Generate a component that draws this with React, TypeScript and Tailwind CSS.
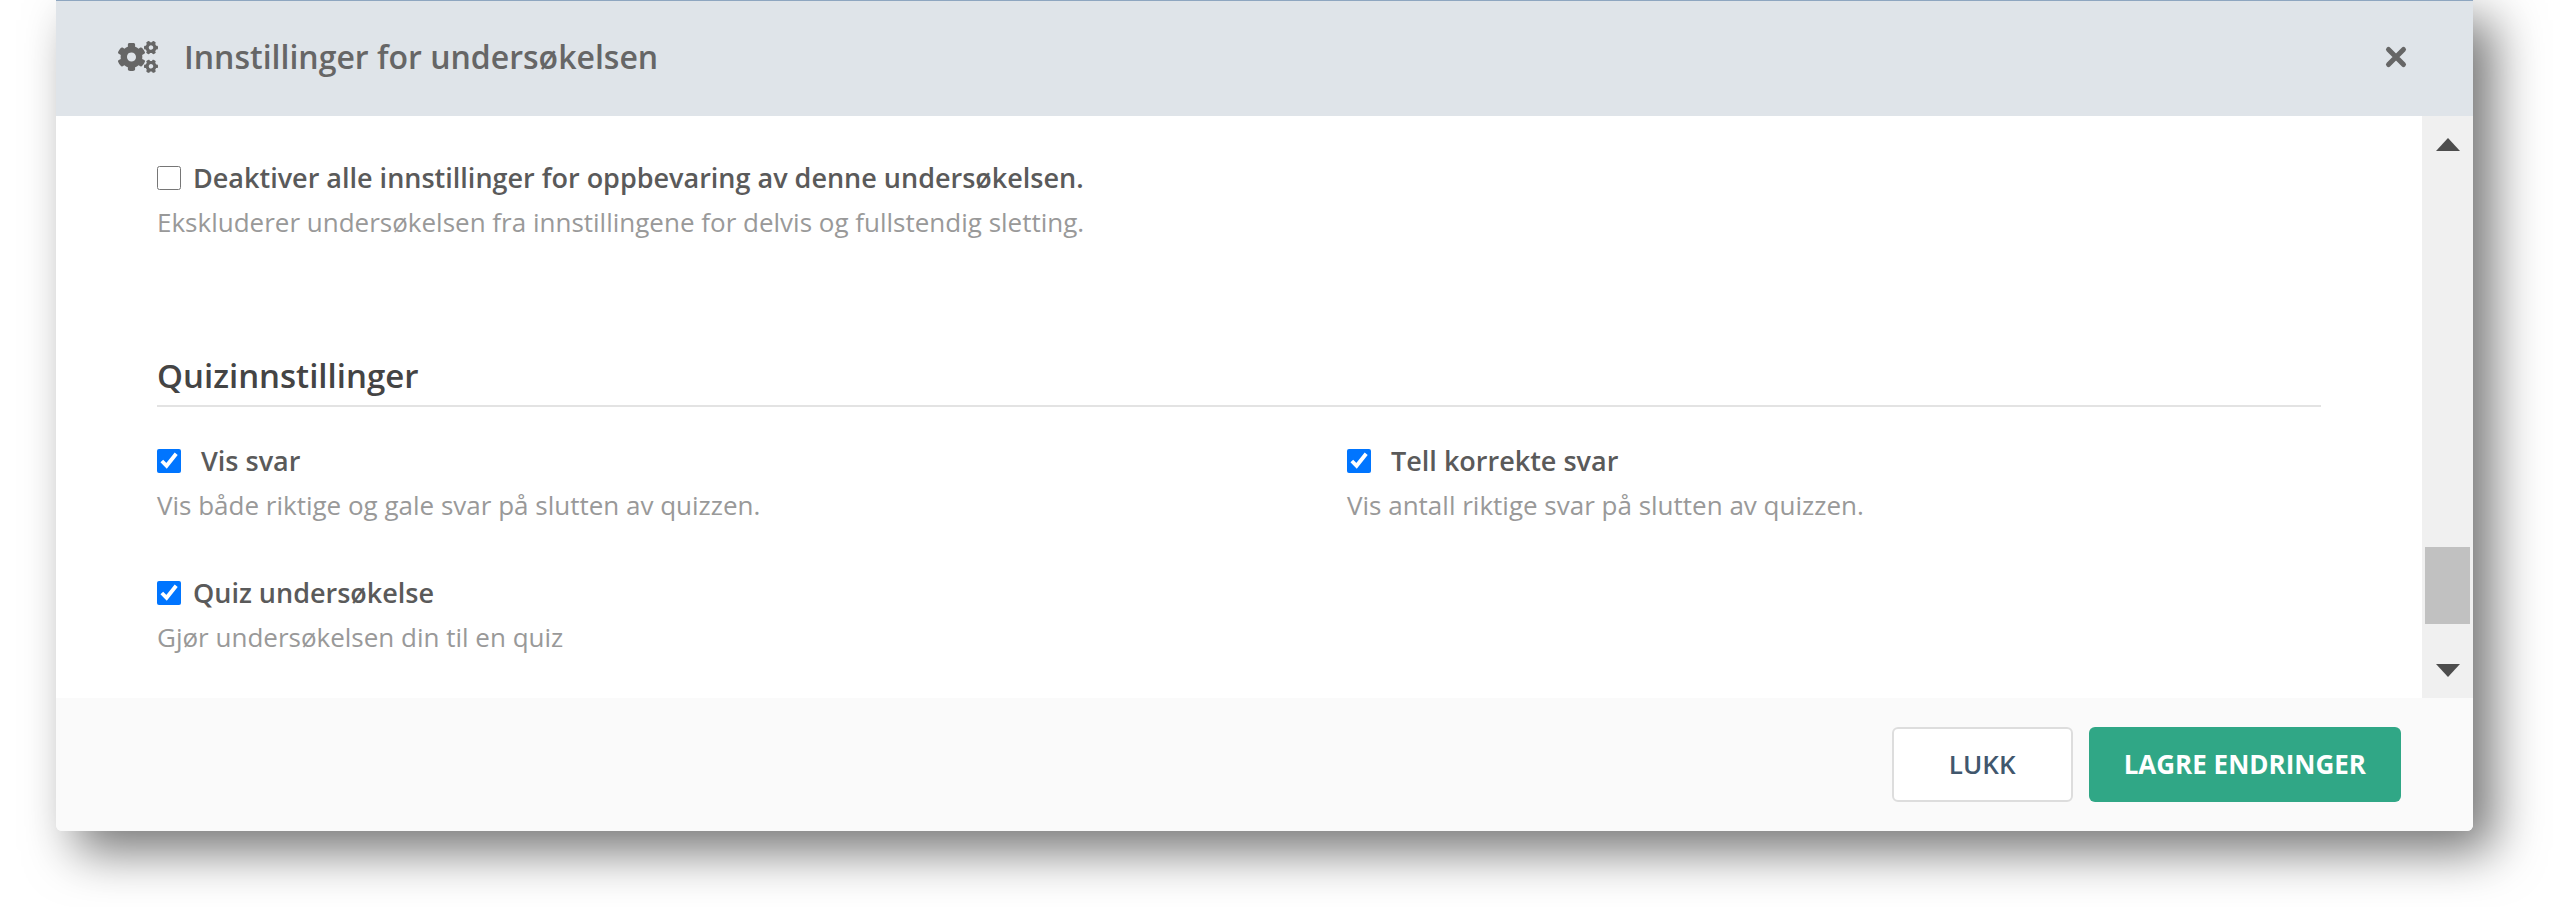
import { FaCogs } from "react-icons/fa";

type SettingProps = {
  id: string;
  label: string;
  description: string;
  checked?: boolean;
  wide?: boolean;
};

const quizSettings: SettingProps[] = [
  {
    id: "show-answers",
    label: "Vis svar",
    description: "Vis både riktige og gale svar på slutten av quizzen.",
    checked: true,
    wide: true,
  },
  {
    id: "count-correct",
    label: "Tell korrekte svar",
    description: "Vis antall riktige svar på slutten av quizzen.",
    checked: true,
    wide: true,
  },
  {
    id: "quiz-survey",
    label: "Quiz undersøkelse",
    description: "Gjør undersøkelsen din til en quiz",
    checked: true,
  },
];

function Setting({ id, label, description, checked = false, wide = false }: SettingProps) {
  return (
    <div>
      <div className={`flex h-11 items-center ${wide ? "gap-5" : "gap-3"}`}>
        <input
          id={id}
          type="checkbox"
          defaultChecked={checked}
          aria-describedby={`${id}-help`}
          className="size-6 shrink-0 accent-[#0075ff]"
        />
        <label htmlFor={id} className="text-[27px] font-semibold text-[#5a5a5a]">
          {label}
        </label>
      </div>
      <p id={`${id}-help`} className="text-[26px] leading-11 text-[#999]">
        {description}
      </p>
    </div>
  );
}

function Scrollbar() {
  return (
    <div className="flex w-[51px] shrink-0 flex-col bg-[#f0f0f0]">
      <button type="button" aria-label="Rull opp" className="flex h-14 items-center justify-center">
        <svg viewBox="0 0 24 13" className="h-[13px] w-6" fill="#4d4d4d">
          <path d="M12 0 24 13H0z" />
        </svg>
      </button>
      <div className="flex flex-1 flex-col px-[3px]">
        <div className="flex-1" />
        <div className="h-[77px] bg-[#c1c1c1]" />
        <div className="h-[18px]" />
      </div>
      <button type="button" aria-label="Rull ned" className="flex h-14 items-center justify-center">
        <svg viewBox="0 0 24 13" className="h-[13px] w-6" fill="#4d4d4d">
          <path d="M0 0h24L12 13z" />
        </svg>
      </button>
    </div>
  );
}

function App() {
  return (
    <div className="overflow-hidden bg-white pr-[87px] pb-[76px] pl-14 font-['Open_Sans',sans-serif]">
      <div
        role="dialog"
        aria-labelledby="dialog-title"
        className="overflow-hidden rounded-b-md bg-white shadow-[20px_20px_50px_rgba(0,0,0,0.55)]"
      >
        <header className="flex h-[116px] items-center border-t border-[#8ea6c0] bg-[#dfe4e9] pr-16 pb-1 pl-[62px] text-[#666]">
          <FaCogs className="mr-[26px] h-8 w-10" />
          <h1 id="dialog-title" className="flex-1 text-[32px] font-semibold">
            Innstillinger for undersøkelsen
          </h1>
          <button type="button" aria-label="Lukk dialog">
            <svg
              viewBox="0 0 26 26"
              className="size-[26px]"
              fill="none"
              stroke="currentColor"
              strokeWidth="5"
              strokeLinecap="round"
            >
              <path d="M5.5 5.5l15 15M20.5 5.5l-15 15" />
            </svg>
          </button>
        </header>

        <div className="flex">
          <main className="min-w-0 flex-1 px-[101px] pt-10 pb-[39px]">
            <Setting
              id="disable-retention"
              label="Deaktiver alle innstillinger for oppbevaring av denne undersøkelsen."
              description="Ekskluderer undersøkelsen fra innstillingene for delvis og fullstendig sletting."
            />
            <h2 className="mt-[106px] border-b-2 border-[#e3e3e3] pb-[3px] text-[33px] leading-[52px] font-semibold text-[#444]">
              Quizinnstillinger
            </h2>
            <div className="mt-8 grid grid-cols-2 gap-x-[216px] gap-y-11">
              {quizSettings.map((setting) => (
                <Setting key={setting.id} {...setting} />
              ))}
            </div>
          </main>
          <Scrollbar />
        </div>

        <footer className="flex h-[133px] items-center justify-end gap-4 bg-[#fafafa] pr-[72px]">
          <button
            type="button"
            className="h-[75px] w-[181px] rounded-md border-2 border-[#ddd] bg-white text-[26px] font-semibold text-[#41576d]"
          >
            LUKK
          </button>
          <button
            type="button"
            className="h-[75px] rounded-md bg-[#30a786] px-[35px] text-[26px] font-bold text-white"
          >
            LAGRE ENDRINGER
          </button>
        </footer>
      </div>
    </div>
  );
}

export default App;
